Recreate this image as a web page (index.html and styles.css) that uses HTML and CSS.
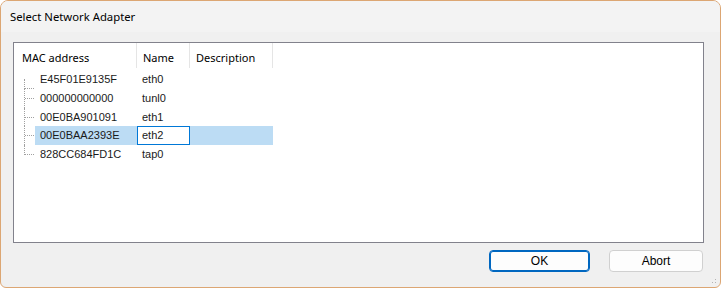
FILE: index.html
```html
<!DOCTYPE html>
<html>

<head>
  <link rel="stylesheet" href="styles.css">
</head>

<body>
  <div class="window">
    <div class="titlebar">Select Network Adapter</div>

    <div class="content">
      <div class="listview">
        <div class="header">
          <div class="col col-mac">MAC address</div>
          <div class="col col-name">Name</div>
          <div class="col col-desc">Description</div>
        </div>

        <div class="tree">
          <div class="row">
            <span class="branch"></span>
            <span class="cell mac">E45F01E9135F</span>
            <span class="cell name">eth0</span>
          </div>
          <div class="row">
            <span class="branch"></span>
            <span class="cell mac">000000000000</span>
            <span class="cell name">tunl0</span>
          </div>
          <div class="row">
            <span class="branch"></span>
            <span class="cell mac">00E0BA901091</span>
            <span class="cell name">eth1</span>
          </div>
          <div class="row selected">
            <span class="branch"></span>
            <span class="cell mac">00E0BAA2393E</span>
            <span class="cell name editing">eth2</span>
            <span class="cell desc"></span>
          </div>
          <div class="row last">
            <span class="branch"></span>
            <span class="cell mac">828CC684FD1C</span>
            <span class="cell name">tap0</span>
          </div>
        </div>
      </div>

      <div class="buttons">
        <button class="btn default">OK</button>
        <button class="btn">Abort</button>
      </div>
    </div>

    <div class="grip"></div>
  </div>
</body>

</html>
```

FILE: styles.css
```css
html,
body {
  margin: 0;
  height: 100%;
  background: #fff;
}

body {
  font-family: 'Noto Sans', 'Open Sans', Arial, sans-serif;
  font-size: 12px;
  color: #1a1a1a;
}

.window {
  position: relative;
  box-sizing: border-box;
  width: 721px;
  height: 288px;
  border: 1px solid #dca673;
  border-radius: 8px 8px 6px 6px;
  background: #f0f0f0;
  overflow: hidden;
  display: flex;
  flex-direction: column;
}

.titlebar {
  height: 31px;
  line-height: 31px;
  padding-left: 9px;
  background: #f3f3f3;
  color: #000;
  font-size: 11.3px;
  flex: none;
}

.content {
  flex: 1;
  padding: 10px 16px 0 12px;
  display: flex;
  flex-direction: column;
}

.listview {
  height: 201px;
  box-sizing: border-box;
  border: 1px solid #82828c;
  background: #fff;
  flex: none;
}

.header {
  display: flex;
  height: 25px;
}

.col {
  box-sizing: border-box;
  line-height: 25px;
  padding-top: 2px;
  padding-left: 8px;
  font-size: 11px;
  border-right: 1px solid #e5e5e5;
  color: #000;
}

.col-mac {
  width: 123px;
}

.col-name {
  width: 53px;
  padding-left: 6px;
}

.col-desc {
  width: 83px;
  padding-left: 6px;
}

.tree {
  position: relative;
  padding-top: 2px;
  font-family: 'Liberation Sans', Arial, sans-serif;
  font-size: 11px;
}

.row {
  position: relative;
  display: flex;
  height: 18.75px;
  line-height: 19px;
  padding-left: 21px;
}

.branch {
  position: absolute;
  left: 10px;
  top: 0;
  width: 9px;
  height: 100%;
  border-left: 1px dotted #a0a0a0;
}

.branch::after {
  content: '';
  position: absolute;
  left: 0;
  top: 9px;
  width: 9px;
  border-top: 1px dotted #a0a0a0;
}

.row:first-child .branch {
  top: 9px;
  height: calc(100% - 9px);
}

.row.last .branch {
  height: 10px;
}

.row.last .branch::after {
  top: 9px;
}

.cell {
  box-sizing: border-box;
  height: 18.75px;
}

.mac {
  width: 102px;
  padding-left: 5px;
}

.name {
  width: 53px;
  padding-left: 5px;
}

.desc {
  width: 83px;
}

.selected .cell {
  background: #bcdcf4;
}

.selected .editing {
  background: #fff;
  border: 1px solid #0078d7;
  padding-left: 4px;
  line-height: 17px;
}

.buttons {
  display: flex;
  justify-content: flex-end;
  gap: 19px;
  margin-top: 7px;
  margin-right: 1px;
}

.btn {
  box-sizing: border-box;
  height: 22px;
  font-family: 'Liberation Sans', Arial, sans-serif;
  font-size: 12px;
  color: #000;
  background: #fdfdfd;
  border: 1px solid #d0d0d0;
  border-radius: 4px;
  padding: 0;
}

.btn.default {
  width: 101px;
  border: 1px solid #0067c0;
  box-shadow: inset 0 0 0 1px #0067c0;
}

.btn:not(.default) {
  width: 94px;
}

.grip {
  position: absolute;
  right: 2px;
  bottom: 2px;
  width: 10px;
  height: 10px;
  background:
    radial-gradient(circle, #b4b4b4 40%, transparent 45%) 0 0 / 3px 3px;
  clip-path: polygon(100% 0, 100% 100%, 0 100%);
}
```
